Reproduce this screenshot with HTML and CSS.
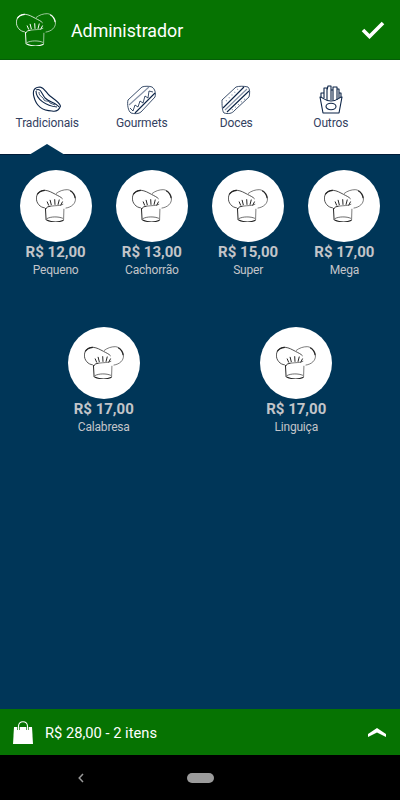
FILE: index.html
```html
<!DOCTYPE html>
<html lang="pt-BR">
<head>
    <meta charset="UTF-8">
    <meta name="viewport" content="width=device-width, initial-scale=1.0">
    <title>Administrador</title>
    <link rel="stylesheet" href="styles.css">
</head>
<body>
    <svg class="sprite">
        <symbol id="hat" viewBox="0 0 120 100">
            <path d="M26 57C12 56 0 43 0.5 27C2 11 14 3 27 4C39 5 48 11 58 16C67 21 75 24 80 30" stroke-width="2.4"/>
            <path d="M3 17C7 9 15 5 26 4" stroke-width="3.4"/>
            <path d="M60 14C70 6 82 2 94 2C108 3 118 15 119 30C119 44 108 55 89 58" stroke-width="1.8"/>
            <path d="M103 5C112 10 117 19 118 28" stroke-width="3.4"/>
            <path d="M33 38L38 50M42 33L46 49M56 31L57 48M70 32L66 48M80 38L74 50" stroke-width="3"/>
            <path d="M28 62C31 55 36 53 44 52M28 58L30 94" stroke-width="3"/>
            <path d="M44 52C58 50 74 51 82 46M84 60L83 94" stroke-width="1.8"/>
            <path d="M32 90C44 83 68 83 81 89" stroke-width="2"/>
            <path d="M31 94C46 100 68 101 83 95" stroke-width="3.2"/>
        </symbol>
    </svg>

    <header class="topbar">
        <svg class="hat hat-light"><use href="#hat"/></svg>
        <h1>Administrador</h1>
        <svg class="check" viewBox="0 0 24 18"><path d="M2 9L8.500 15.500L22 2"/></svg>
    </header>

    <nav class="tabs">
        <a class="tab active">
            <svg viewBox="0 0 30 30">
                <path d="M2 12C0 5 3 2 8 2C13 3 14 8 18 11C22 14 28 18 28.500 21C27 25 24 27 20 26C10 26 4 20 2 12Z"/>
                <path d="M4 5C9 3 9 8 13 13C17 17 25 18 27 22M4 6C4 14 14 21 25 22"/>
                <path class="thin" d="M7 7C7 12 11 11 12 15C14 17 17 15 18 18L23 20"/>
            </svg>
            <span>Tradicionais</span>
        </a>
        <a class="tab">
            <svg viewBox="0 0 30 30">
                <path class="thin" d="M1 15L15 2C17 1 23 1 25 2C28 4 29 8 28 12L14 27C12 29 7 29 4 28C1 26 0 19 1 15Z"/>
                <path class="soft" d="M2 20L22 2"/>
                <path d="M8 28L28 8"/>
                <path class="thin" d="M3 23L6 26L8 20L11 22L13 16L16 18L18 11L21 13L22 6L26 7"/>
            </svg>
            <span>Gourmets</span>
        </a>
        <a class="tab">
            <svg viewBox="0 0 30 30">
                <path class="thin" d="M1 15L15 2C18 1 23 1 27 2C29 4 29 8 28 12L14 25C11 29 7 29 3 28C1 26 1 19 1 15Z"/>
                <path d="M2 23L23 2M6 27L28 6"/>
                <path class="soft" d="M4 25L26 4"/>
                <path class="dots" d="M5 16L17 4M11 25L26 12"/>
            </svg>
            <span>Doces</span>
        </a>
        <a class="tab">
            <svg viewBox="0 0 30 30">
                <path d="M4 12L7 28H23L26 12C23 12 22 16 15 16C8 16 7 12 4 12Z"/>
                <ellipse cx="15" cy="21.500" rx="5" ry="3.200"/>
                <path d="M5 12V8H8V13M8 8V3H11V15M11 5L12 1H15V15M15 5H17V15M17 5V2H21V15M21 4H23V13M23 8H25V12"/>
            </svg>
            <span>Outros</span>
        </a>
    </nav>

    <main class="products">
        <div class="row">
            <div class="product">
                <div class="circle"><svg class="hat"><use href="#hat"/></svg></div>
                <strong>R$ 12,00</strong>
                <span>Pequeno</span>
            </div>
            <div class="product">
                <div class="circle"><svg class="hat"><use href="#hat"/></svg></div>
                <strong>R$ 13,00</strong>
                <span>Cachorrão</span>
            </div>
            <div class="product">
                <div class="circle"><svg class="hat"><use href="#hat"/></svg></div>
                <strong>R$ 15,00</strong>
                <span>Super</span>
            </div>
            <div class="product">
                <div class="circle"><svg class="hat"><use href="#hat"/></svg></div>
                <strong>R$ 17,00</strong>
                <span>Mega</span>
            </div>
        </div>
        <div class="row">
            <div class="product">
                <div class="circle"><svg class="hat"><use href="#hat"/></svg></div>
                <strong>R$ 17,00</strong>
                <span>Calabresa</span>
            </div>
            <div class="product">
                <div class="circle"><svg class="hat"><use href="#hat"/></svg></div>
                <strong>R$ 17,00</strong>
                <span>Linguiça</span>
            </div>
        </div>
    </main>

    <footer class="cart">
        <svg class="bag" viewBox="0 0 20 23">
            <path d="M1 6H19L20 23H0Z" fill="#fff"/>
            <path d="M5.500 6V9M14.500 6V9" stroke="#067302" stroke-width="2.4"/>
            <path d="M5.500 9V5C6 -.7 14 -.7 14.500 5V9" fill="none" stroke="#fff" stroke-width="1.100"/>
        </svg>
        <span>R$ 28,00 - 2 itens</span>
        <svg class="chevron" viewBox="0 0 18 9"><path d="M0 6L9 0L18 6V9L9 4.500L0 9Z"/></svg>
    </footer>

    <div class="system-nav">
        <svg class="back" viewBox="0 0 6 10"><path d="M5 1L1.200 5L5 9"/></svg>
        <div class="home"></div>
    </div>
</body>
</html>
```

FILE: styles.css
```css
* {
    box-sizing: border-box;
}
body {
    font-family: Roboto, Arial, sans-serif;
    margin: 0;
    height: 100vh;
    display: flex;
    flex-direction: column;
    background: #003658;
    color: #fff;
    overflow: hidden;
}
svg {
    display: block;
    flex: none;
}
.sprite {
    display: none;
}
.hat {
    width: 42px;
    height: 35px;
    fill: none;
    stroke: #222;
    overflow: visible;
    padding: 1px;
}
.hat-light {
    stroke: #fff;
}
.topbar {
    flex: none;
    height: 60px;
    padding: 0 15px;
    display: flex;
    align-items: center;
    background: #067302;
    border-bottom: 1px solid #055d08;
}
.topbar h1 {
    flex: 1;
    margin: 0 0 0 14px;
    padding-top: 3px;
    font-size: 17.8px;
    font-weight: 400;
    line-height: 24px;
}
.check {
    width: 24px;
    height: 18px;
    margin-top: 1px;
    fill: none;
    stroke: #fff;
    stroke-width: 3.6;
}
.tabs {
    flex: none;
    height: 95px;
    padding-right: 22px;
    display: flex;
    background: #fff;
    border-bottom: 1px solid #001c38;
}
.tab {
    flex: 1;
    position: relative;
    display: flex;
    flex-direction: column;
    align-items: center;
    padding-top: 25px;
    color: #33415f;
    font-size: 12px;
    line-height: 14px;
    letter-spacing: -0.15px;
}
.tab svg {
    width: 30px;
    height: 30px;
    margin-bottom: 1px;
    fill: none;
    stroke: #0b2346;
    stroke-width: 1.1;
    stroke-linejoin: round;
}
.tab .thin {
    stroke-width: 0.8;
}
.tab .soft {
    stroke: #8490a6;
}
.tab .dots {
    stroke: #8490a6;
    stroke-dasharray: 1 3;
}
/* arrow under the selected category */
.tab.active::after {
    content: "";
    position: absolute;
    bottom: -1px;
    left: 50%;
    margin-left: -18px;
    border: 18px solid transparent;
    border-top: 0;
    border-bottom: 11px solid #003658;
}
.products {
    flex: 1;
    padding: 14px 7.5px 0;
}
.row {
    display: flex;
    justify-content: space-around;
    height: 157px;
}
.product {
    display: flex;
    flex-direction: column;
    align-items: center;
    width: 96px;
    color: #c3c5c9;
}
.circle {
    width: 72px;
    height: 72px;
    margin: 0.5px 0;
    border-radius: 50%;
    background: #fff;
    display: flex;
    align-items: center;
    justify-content: center;
}
.product strong {
    font-size: 15px;
    font-weight: 700;
    line-height: 21px;
}
.product span {
    font-size: 12px;
    line-height: 15px;
    letter-spacing: -0.2px;
}
.cart {
    flex: none;
    height: 46px;
    padding: 0 14px 0 13px;
    display: flex;
    align-items: center;
    background: #067302;
    font-size: 14.7px;
}
.cart span {
    flex: 1;
    margin-left: 12px;
    padding-top: 1px;
}
.bag {
    width: 20px;
    height: 23px;
}
.chevron {
    width: 18px;
    height: 9px;
    fill: #fff;
}
.system-nav {
    flex: none;
    height: 45px;
    padding-left: 78px;
    display: flex;
    align-items: center;
    background: #000;
}
.back {
    width: 6px;
    height: 10px;
    fill: none;
    stroke: #999;
    stroke-width: 1.5;
}
.home {
    width: 27px;
    height: 10px;
    margin-left: 103px;
    border-radius: 5px;
    background: #9b9b9b;
}
```
